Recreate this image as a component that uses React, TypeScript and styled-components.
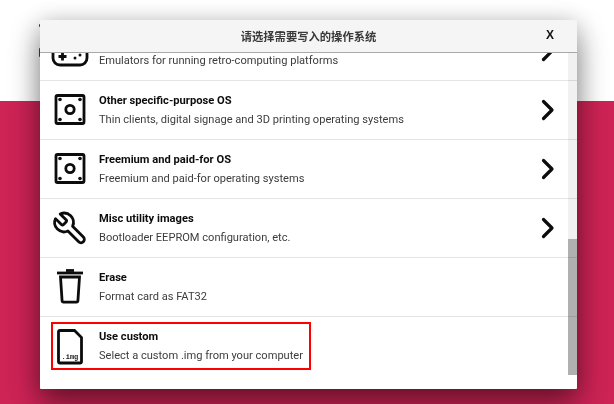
import React from "react";
import styled, { createGlobalStyle } from "styled-components";

const Global = createGlobalStyle`
  html, body { margin: 0; padding: 0; width: 614px; height: 404px; overflow: hidden; background: #fff; }
  * { box-sizing: border-box; }
`;

const Page = styled.div`
  position: relative;
  width: 614px;
  height: 404px;
  display: flex;
  flex-direction: column;
  overflow: hidden;
  font-family: Roboto, "Noto Sans CJK SC", sans-serif;
  filter: blur(0.4px);
`;

const TopBand = styled.div`
  height: 101px;
  background: #ffffff;
`;

const BottomBand = styled.div`
  flex: 1;
  background: #cd2355;
`;

const BehindMark = styled.div<{ $top: number; $height: number }>`
  position: absolute;
  left: 38.5px;
  top: ${(p) => p.$top}px;
  width: 1.5px;
  height: ${(p) => p.$height}px;
  background: #444;
  border-radius: 1px 0 0 1px;
`;

const Dialog = styled.div`
  position: absolute;
  left: 40px;
  top: 20px;
  width: 537px;
  height: 369px;
  display: flex;
  flex-direction: column;
  background: #fff;
  border-radius: 1px;
  box-shadow: 0 14px 30px rgba(0, 0, 0, 0.48), 0 0 22px rgba(0, 0, 0, 0.12);
`;

const Header = styled.div`
  position: relative;
  z-index: 2;
  height: 33px;
  flex: none;
  display: flex;
  align-items: center;
  justify-content: center;
  background: #f5f5f5;
  border-bottom: 1px solid #a8a8a8;
`;

const Title = styled.div`
  font-family: "Noto Sans CJK SC", sans-serif;
  font-size: 11.3px;
  font-weight: 700;
  color: #3a3a3a;
`;

const Close = styled.div`
  position: absolute;
  right: 23px;
  top: 8px;
  font-family: "Liberation Sans", sans-serif;
  font-size: 12px;
  font-weight: 700;
  line-height: 15px;
  color: #111;
`;

const ListArea = styled.div`
  position: relative;
  flex: 1;
  overflow: hidden;
`;

const List = styled.div`
  margin-top: -31px;
  display: flex;
  flex-direction: column;
`;

const Row = styled.div`
  position: relative;
  height: 59px;
  flex: none;
  display: flex;
  align-items: center;
  padding-left: 10px;
  border-bottom: 1.5px solid #e4e4e4;
  &:last-child { border-bottom: none; }
`;

const IconBox = styled.svg`
  width: 40px;
  height: 40px;
  flex: none;
  fill: none;
  stroke: #0c0c0c;
  stroke-width: 2.8;
`;

const TextBlock = styled.div`
  flex: 1;
  margin-left: 9px;
  display: flex;
  flex-direction: column;
`;

const RowTitle = styled.div`
  min-height: 18px;
  font-size: 11.15px;
  font-weight: 700;
  line-height: 18px;
  color: #0c0c0c;
`;

const RowSub = styled.div`
  font-size: 11.08px;
  line-height: 19px;
  color: #3c3c3c;
`;

const Chevron = styled.svg`
  width: 20px;
  height: 24px;
  flex: none;
  margin-right: 19px;
  fill: none;
  stroke: #0c0c0c;
  stroke-width: 3.2;
  stroke-linecap: round;
  stroke-linejoin: round;
`;

const Highlight = styled.div`
  position: absolute;
  left: 11px;
  top: 5px;
  width: 260px;
  height: 48px;
  border: 2px solid #ff0000;
  pointer-events: none;
`;

const Track = styled.div`
  position: absolute;
  right: 0.5px;
  top: 0;
  width: 9px;
  height: 322px;
  background: rgba(0, 0, 0, 0.055);
`;

const Thumb = styled.div`
  position: absolute;
  left: 0;
  top: 186px;
  width: 100%;
  height: 136px;
  background: rgba(0, 0, 0, 0.27);
`;

const Arrow = () => (
  <Chevron viewBox="0 0 20 24">
    <path d="M5.500 3.500 L14 12 L5.500 20.500" />
  </Chevron>
);

const Gamepad = () => (
  <IconBox viewBox="0 0 40 40">
    <rect x="3" y="8" width="34" height="26" rx="7" />
    <path d="M8.500 25.500h8M12.500 21.500v8" />
    <circle cx="25" cy="27" r="1.500" fill="#111" stroke="none" />
    <circle cx="30" cy="24" r="1.500" fill="#111" stroke="none" />
  </IconBox>
);

const Chip = () => (
  <IconBox viewBox="0 0 40 40">
    <rect x="6" y="5.500" width="28" height="28" rx="1.500" />
    <circle cx="20" cy="19.500" r="4.200" />
    <g fill="#111" stroke="none">
      <circle cx="10" cy="9.500" r="1.800" />
      <circle cx="30" cy="9.500" r="1.800" />
      <circle cx="10" cy="29.500" r="1.800" />
      <circle cx="30" cy="29.500" r="1.800" />
    </g>
  </IconBox>
);

const WrenchIcon = () => (
  <IconBox viewBox="0 0 40 40">
    <g transform="translate(39 2) scale(-1.560 1.560)" strokeWidth="1.800" strokeLinejoin="round">
      <path d="M14.700 6.300a1 1 0 0 0 0 1.400l1.600 1.600a1 1 0 0 0 1.400 0l3.770-3.770a6 6 0 0 1-7.940 7.940l-6.910 6.910a2.120 2.120 0 0 1-3-3l6.910-6.910a6 6 0 0 1 7.940-7.940l-3.760 3.760z" />
    </g>
  </IconBox>
);

const Trash = () => (
  <IconBox viewBox="0 0 40 40">
    <path d="M7 6h26" />
    <path d="M16 3.500h8" />
    <path d="M10.500 10h19l-1.600 24a1.500 1.500 0 0 1-1.500 1.200H13.600a1.500 1.500 0 0 1-1.500-1.200z" />
  </IconBox>
);

const ImgText = styled.text`
  font-family: "Liberation Mono", monospace;
  font-size: 7px;
  font-weight: 700;
  fill: #222;
  stroke: none;
`;

const ImgFile = () => (
  <IconBox viewBox="0 0 40 40">
    <path d="M10 3.500h14.500L31.500 10.500v24a1.500 1.500 0 0 1-1.500 1.500H10A1.500 1.500 0 0 1 8.500 34.500V5A1.500 1.500 0 0 1 10 3.500z" />
    <ImgText x="11.500" y="31.500">.img</ImgText>
  </IconBox>
);

const items = [
  { id: "emulators", icon: <Gamepad />, title: "", sub: "Emulators for running retro-computing platforms", more: true },
  { id: "other", icon: <Chip />, title: "Other specific-purpose OS", sub: "Thin clients, digital signage and 3D printing operating systems", more: true },
  { id: "freemium", icon: <Chip />, title: "Freemium and paid-for OS", sub: "Freemium and paid-for operating systems", more: true },
  { id: "misc", icon: <WrenchIcon />, title: "Misc utility images", sub: "Bootloader EEPROM configuration, etc.", more: true },
  { id: "erase", icon: <Trash />, title: "Erase", sub: "Format card as FAT32", more: false },
  { id: "custom", icon: <ImgFile />, title: "Use custom", sub: "Select a custom .img from your computer", more: false, marked: true },
];

export default function App() {
  return (
    <Page>
      <Global />
      <TopBand />
      <BottomBand />
      <BehindMark $top={24} $height={3} />
      <BehindMark $top={48} $height={9} />
      <Dialog>
        <Header>
          <Title>请选择需要写入的操作系统</Title>
          <Close>X</Close>
        </Header>
        <ListArea>
          <List>
            {items.map((it) => (
              <Row key={it.id}>
                {it.icon}
                <TextBlock>
                  <RowTitle>{it.title}</RowTitle>
                  <RowSub>{it.sub}</RowSub>
                </TextBlock>
                {it.more && <Arrow />}
                {it.marked && <Highlight />}
              </Row>
            ))}
          </List>
          <Track>
            <Thumb />
          </Track>
        </ListArea>
      </Dialog>
    </Page>
  );
}
